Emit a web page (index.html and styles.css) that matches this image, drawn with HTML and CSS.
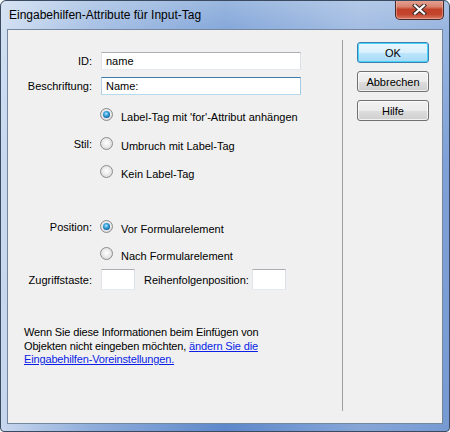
FILE: index.html
```html
<!DOCTYPE html>
<html lang="de">
<head>
<meta charset="utf-8">
<title>Eingabehilfen-Attribute für Input-Tag</title>
<link rel="stylesheet" href="styles.css">
</head>
<body>
<div class="window">
  <div class="titlebar">
    <span class="title">Eingabehilfen-Attribute für Input-Tag</span>
    <button class="close" aria-label="Schließen">
      <svg width="15" height="11" viewBox="0 0 15 11">
        <path d="M3 1.5 L12 9.5 M12 1.5 L3 9.5" stroke="#3a2a2a" stroke-width="4.2" stroke-linecap="square" fill="none"/>
        <path d="M3 1.5 L12 9.5 M12 1.5 L3 9.5" stroke="#ffffff" stroke-width="2.2" stroke-linecap="square" fill="none"/>
      </svg>
    </button>
  </div>
  <div class="client">
    <div class="form">
      <div class="row r-id">
        <label class="lbl">ID:</label>
        <div class="field"><div class="input">name</div></div>
      </div>
      <div class="row r-besch">
        <label class="lbl">Beschriftung:</label>
        <div class="field"><div class="input focused">Name:</div></div>
      </div>
      <div class="row radio-row r-s1">
        <span class="lbl"></span>
        <div class="opt"><span class="radio checked"></span><span class="opt-text">Label-Tag mit 'for'-Attribut anhängen</span></div>
      </div>
      <div class="row radio-row r-s2">
        <span class="lbl">Stil:</span>
        <div class="opt"><span class="radio"></span><span class="opt-text">Umbruch mit Label-Tag</span></div>
      </div>
      <div class="row radio-row r-s3">
        <span class="lbl"></span>
        <div class="opt"><span class="radio"></span><span class="opt-text">Kein Label-Tag</span></div>
      </div>
      <div class="row radio-row r-p1">
        <span class="lbl">Position:</span>
        <div class="opt"><span class="radio checked"></span><span class="opt-text">Vor Formularelement</span></div>
      </div>
      <div class="row radio-row r-p2">
        <span class="lbl"></span>
        <div class="opt"><span class="radio"></span><span class="opt-text">Nach Formularelement</span></div>
      </div>
      <div class="row r-keys">
        <label class="lbl">Zugriffstaste:</label>
        <div class="field keys">
          <div class="input small"></div>
          <span class="order-lbl">Reihenfolgenposition:</span>
          <div class="input small"></div>
        </div>
      </div>
      <p class="note">Wenn Sie diese Informationen beim Einfügen von<br>Objekten nicht eingeben möchten, <a href="#">ändern Sie die<br>Eingabehilfen-Voreinstellungen.</a></p>
    </div>
    <div class="actions">
      <button class="btn default">OK</button>
      <button class="btn">Abbrechen</button>
      <button class="btn">Hilfe</button>
    </div>
  </div>
</div>
</body>
</html>
```

FILE: styles.css
```css
* { box-sizing: border-box; }
html, body { margin: 0; padding: 0; background: #ffffff; }
body { font-family: "Liberation Sans", Arial, sans-serif; font-size: 11px; color: #000; }

.window {
  width: 450px;
  height: 432px;
  border: 1px solid #3a4a60;
  border-radius: 6px 6px 4px 4px;
  display: flex;
  flex-direction: column;
  overflow: hidden;
  background:
    linear-gradient(to right, rgba(235,242,250,0.75) 0, rgba(235,242,250,0.35) 20%, rgba(255,255,255,0) 50%, rgba(255,255,255,0.25) 80%, rgba(255,255,255,0.15) 100%),
    linear-gradient(to bottom, #9ab7df 0, #86a8da 28px, #6990d0 160px, #5e88ca 100%);
}

.titlebar {
  height: 28px;
  display: flex;
  align-items: flex-start;
  justify-content: space-between;
}
.title {
  padding-left: 8px;
  line-height: 28px;
  font-size: 12px;
  color: #000;
}
.close {
  margin: -1px 5px 0 0;
  width: 49px;
  height: 20px;
  padding: 0;
  border: 1px solid #4a2a26;
  border-top: none;
  border-radius: 0 0 5px 5px;
  background: linear-gradient(to bottom, #e6a495 0, #d9836f 35%, #c24128 50%, #c3442c 75%, #d87a62 100%);
  box-shadow: inset 0 0 0 1px rgba(255,200,190,0.45);
  display: flex;
  align-items: center;
  justify-content: center;
}
.close svg { display: block; }

.client {
  flex: 1;
  margin: 0 6px 7px 6px;
  border: 1px solid #75869f;
  background: #f0f0f0;
  display: flex;
}

.form {
  width: 334px;
  padding-top: 22px;
  display: flex;
  flex-direction: column;
}
.row {
  display: grid;
  grid-template-columns: 84px 1fr;
  column-gap: 9px;
  align-items: center;
}
.lbl { text-align: right; white-space: nowrap; }
.r-id { height: 18px; }
.r-besch { height: 18px; margin-top: 7px; }
.radio-row { height: 20px; }
.r-s1 { margin-top: 9px; }
.r-s2 { margin-top: 9px; }
.r-s3 { margin-top: 8px; }
.r-p1 { margin-top: 35px; }
.r-p2 { margin-top: 7px; }
.r-keys { height: 21px; margin-top: 6px; }

.input {
  width: 200px;
  height: 18px;
  background: #fff;
  border: 1px solid;
  border-color: #abadb3 #dbdfe6 #e3e9ef #e2e3ea;
  padding: 0 4px;
  line-height: 16px;
  white-space: nowrap;
}
.input.focused { border-color: #3d7bad #a4c9e3 #b7d9ed #b5cfe7; }
.input.small { width: 34px; height: 21px; }

.keys { display: flex; align-items: center; }
.order-lbl { margin-left: 9px; margin-right: 3px; white-space: nowrap; letter-spacing: -0.05px; }

.opt { display: flex; align-items: center; margin-left: -1px; }
.opt-text { margin-left: 8px; margin-top: 5px; white-space: nowrap; }
.radio-row .lbl { margin-top: 1px; }
.radio {
  position: relative;
  width: 13px;
  height: 13px;
  border-radius: 50%;
  border: 1px solid #8a8c8e;
  background: radial-gradient(circle at 50% 45%, #ffffff 0, #f0f0f0 35%, #cfd0d1 100%);
  flex: none;
}
.radio.checked::after {
  content: "";
  position: absolute;
  left: 2px;
  top: 2px;
  width: 7px;
  height: 7px;
  border-radius: 50%;
  background: radial-gradient(circle at 45% 40%, #b9ecff 0, #3aa6e0 35%, #0f5d9c 75%, #0a3c6a 100%);
}

.note {
  margin: 36px 0 0 16px;
  line-height: 13.5px;
  white-space: nowrap;
  letter-spacing: -0.15px;
}
.note a { color: #0a1ee6; text-decoration: underline; }

.actions {
  margin: 10px 0 12px 0;
  border-left: 1px solid #a0a0a0;
  padding: 2px 0 0 14px;
  display: flex;
  flex-direction: column;
  gap: 8px;
}
.btn {
  width: 72px;
  height: 21px;
  padding: 0;
  font-family: "Liberation Sans", Arial, sans-serif;
  font-size: 11px;
  color: #000;
  border: 1px solid #707070;
  border-radius: 3px;
  background: linear-gradient(to bottom, #f2f2f2 0, #ebebeb 50%, #dddddd 51%, #cfcfcf 100%);
  box-shadow: inset 0 0 0 1px rgba(255,255,255,0.7);
}
.btn.default {
  border-color: #3c7fb1;
  background: linear-gradient(to bottom, #eaf6fd 0, #d9f0fc 50%, #bee6fd 51%, #a7d9f5 100%);
  box-shadow: inset 0 0 0 1px #48d5fa;
}
```
